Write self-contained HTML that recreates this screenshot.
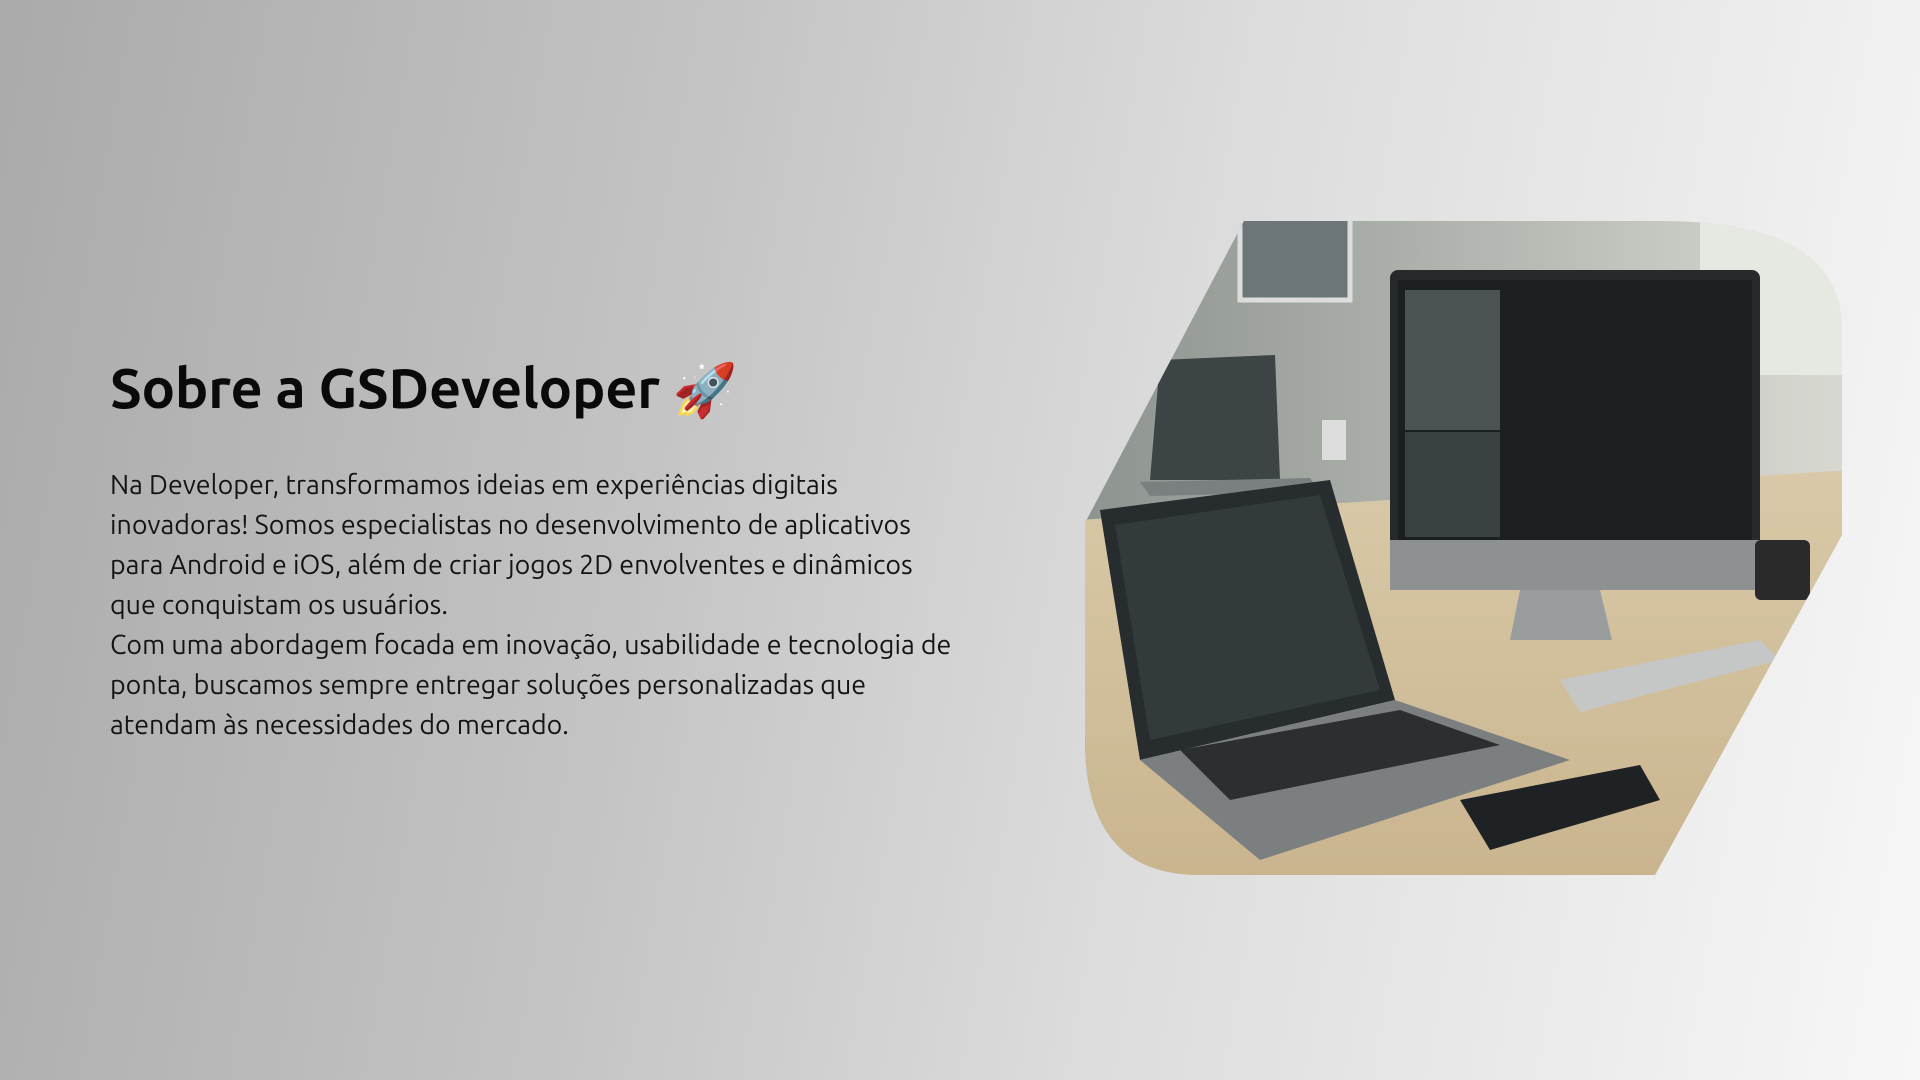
<!DOCTYPE html>
<html><head><meta charset="utf-8"><style>
html,body{margin:0;width:1920px;height:1080px;overflow:hidden}
body{background:linear-gradient(100deg,#aaaaaa 0%,#c4c4c4 35%,#dcdcdc 60%,#f7f7f7 100%);font-family:"Ubuntu","Liberation Sans","DejaVu Sans",sans-serif;color:#111}
h1{position:absolute;left:110px;top:356px;margin:0;font-size:56px;font-weight:bold;letter-spacing:-0.3px;color:#0a0a0a}
p{position:absolute;left:110px;top:465px;margin:0;width:900px;font-size:26.8px;line-height:40px;color:#141414}
svg{position:absolute;left:0;top:0}
</style></head><body>
<h1>Sobre a GSDeveloper <span style="font-size:52px">🚀</span></h1>
<p>Na Developer, transformamos ideias em experiências digitais<br>inovadoras! Somos especialistas no desenvolvimento de aplicativos<br>para Android e iOS, além de criar jogos 2D envolventes e dinâmicos<br>que conquistam os usuários.<br>Com uma abordagem focada em inovação, usabilidade e tecnologia de<br>ponta, buscamos sempre entregar soluções personalizadas que<br>atendam às necessidades do mercado.</p>
<svg width="1920" height="1080">
<defs>
<clipPath id="c"><path d="M1244 221 L1660 221 Q1842 221 1842 330 L1842 535 L1655 875 L1200 875 Q1085 875 1085 740 L1085 523 Z"/></clipPath>
<linearGradient id="wall" x1="0" y1="0" x2="1" y2="0"><stop offset="0" stop-color="#8d938f"/><stop offset="0.6" stop-color="#b9bcb6"/><stop offset="1" stop-color="#d8dad2"/></linearGradient>
<linearGradient id="desk" x1="0" y1="0" x2="0" y2="1"><stop offset="0" stop-color="#d9c9a8"/><stop offset="1" stop-color="#c9b48e"/></linearGradient>
</defs>
<g clip-path="url(#c)">
<rect x="1080" y="215" width="770" height="670" fill="url(#wall)"/>
<rect x="1240" y="200" width="110" height="100" fill="#6c7678" stroke="#ddd" stroke-width="5"/>
<rect x="1700" y="215" width="150" height="160" fill="#e6e8e2"/>
<polygon points="1080,520 1850,470 1850,885 1080,885" fill="url(#desk)"/>
<polygon points="1160,360 1275,355 1280,480 1150,480" fill="#3d4446"/>
<polygon points="1140,482 1310,478 1320,492 1150,496" fill="#7a7f80"/>
<rect x="1322" y="420" width="24" height="40" fill="#ddd"/>
<rect x="1390" y="270" width="370" height="285" rx="8" fill="#262a2b"/>
<rect x="1398" y="280" width="354" height="262" fill="#1b1f20"/>
<rect x="1405" y="290" width="95" height="140" fill="#4a5253"/>
<rect x="1405" y="432" width="95" height="105" fill="#3a4142"/>
<rect x="1390" y="540" width="370" height="50" fill="#8d9191"/>
<polygon points="1520,590 1600,590 1612,640 1510,640" fill="#9a9d9d"/>
<polygon points="1560,680 1760,640 1780,660 1580,712" fill="#c4c7c6"/>
<rect x="1755" y="540" width="55" height="60" rx="6" fill="#2a2a2a"/>
<polygon points="1100,510 1330,480 1395,700 1140,760" fill="#272c2e"/>
<polygon points="1115,525 1320,495 1380,690 1150,740" fill="#323a3c"/>
<polygon points="1140,760 1395,700 1570,760 1260,860" fill="#7b7f80"/>
<polygon points="1180,750 1400,710 1500,745 1230,800" fill="#2b2f30"/>
<polygon points="1460,800 1640,765 1660,800 1490,850" fill="#1e2224"/>
</g>
</svg>
</body></html>
